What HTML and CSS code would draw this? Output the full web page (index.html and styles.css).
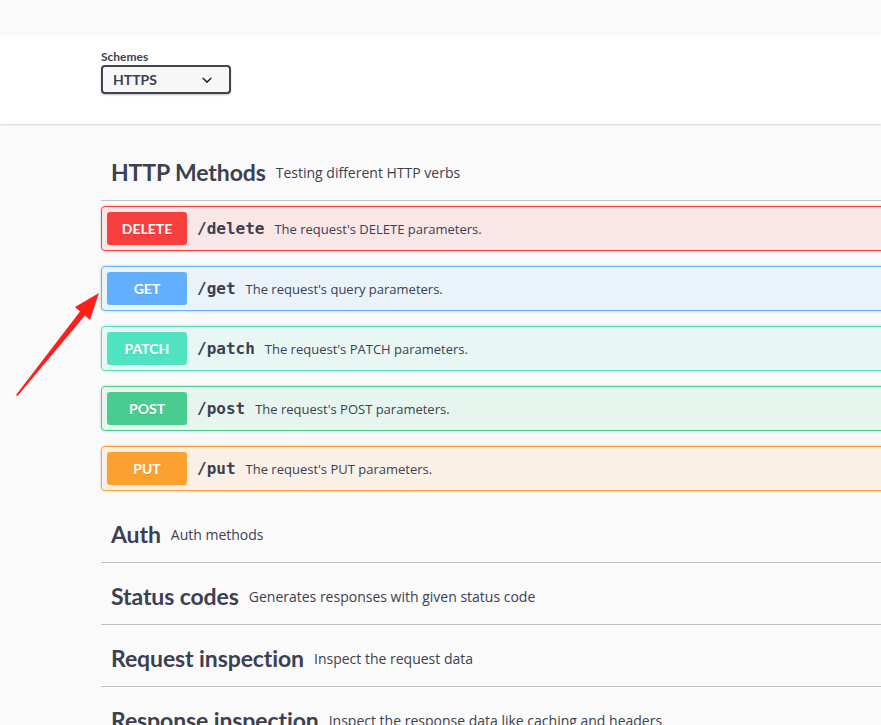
FILE: index.html
```html
<!DOCTYPE html>
<html lang="en">
<head>
<meta charset="utf-8">
<title>HTTP Methods</title>
<link rel="stylesheet" href="styles.css">
</head>
<body>
<div class="topbar"></div>
<section class="scheme-container">
  <div class="schemes">
    <div class="schemes-label">Schemes</div>
    <div class="select">
      <span>HTTPS</span>
      <svg class="chev" width="20" height="20" viewBox="0 0 20 20"><path d="M13.418 7.859a.695.695 0 01.978 0 .68.68 0 010 .969l-3.908 3.83a.697.697 0 01-.979 0l-3.908-3.83a.68.68 0 010-.969.695.695 0 01.978 0L10 11l3.418-3.141z" fill="#222"/></svg>
    </div>
  </div>
</section>
<main class="wrapper">
  <h4 class="tag"><span class="tag-name">HTTP Methods</span><small class="tag-desc">Testing different HTTP verbs</small></h4>
  <div class="ops">
    <div class="opblock op-delete"><div class="summary"><span class="method">DELETE</span><span class="path">/delete</span><span class="desc">The request's DELETE parameters.</span></div></div>
    <div class="opblock op-get"><div class="summary"><span class="method">GET</span><span class="path">/get</span><span class="desc">The request's query parameters.</span></div></div>
    <div class="opblock op-patch"><div class="summary"><span class="method">PATCH</span><span class="path">/patch</span><span class="desc">The request's PATCH parameters.</span></div></div>
    <div class="opblock op-post"><div class="summary"><span class="method">POST</span><span class="path">/post</span><span class="desc">The request's POST parameters.</span></div></div>
    <div class="opblock op-put"><div class="summary"><span class="method">PUT</span><span class="path">/put</span><span class="desc">The request's PUT parameters.</span></div></div>
  </div>
  <h4 class="tag"><span class="tag-name">Auth</span><small class="tag-desc">Auth methods</small></h4>
  <h4 class="tag"><span class="tag-name">Status codes</span><small class="tag-desc">Generates responses with given status code</small></h4>
  <h4 class="tag"><span class="tag-name">Request inspection</span><small class="tag-desc">Inspect the request data</small></h4>
  <h4 class="tag"><span class="tag-name">Response inspection</span><small class="tag-desc">Inspect the response data like caching and headers</small></h4>
</main>
<svg class="annot" width="110" height="410" viewBox="0 0 110 410">
  <polygon points="16,395 80,311.5 75,307 99,293 90,320 85,315.5 17.5,396" fill="#ff1f1a"/>
</svg>
</body>
</html>
```

FILE: styles.css
```css
html, body {
  margin: 0;
  padding: 0;
}
body {
  background: #fafafa;
  overflow: hidden;
  position: relative;
  font-family: "Open Sans", "Noto Sans", sans-serif;
  color: #3b4151;
  height: 725px;
}
.topbar {
  height: 35px;
  background: #fafafa;
}
.scheme-container {
  background: #fff;
  box-shadow: 0 1px 2px 0 rgba(0, 0, 0, 0.15);
  padding: 14px 0 30px 101px;
}
.schemes-label {
  font-family: Lato, sans-serif;
  font-weight: 700;
  font-size: 12px;
  line-height: 16px;
  color: #3b4151;
}
.select {
  box-sizing: border-box;
  width: 130px;
  height: 29px;
  border: 2px solid #41444e;
  border-radius: 4px;
  background: #f7f7f7;
  box-shadow: 0 1px 2px 0 rgba(0, 0, 0, 0.25);
  display: flex;
  align-items: center;
  justify-content: space-between;
  padding: 0 12px 0 10px;
  font-family: Lato, sans-serif;
  font-weight: 700;
  font-size: 14px;
  color: #3b4151;
}
.chev {
  display: block;
}
.wrapper {
  margin: 20px 0 0 101px;
  width: 900px;
}
.tag {
  display: flex;
  align-items: center;
  margin: 0 0 5px;
  padding: 10px 20px 10px 10px;
  border-bottom: 1px solid rgba(59, 65, 81, 0.3);
}
.tag-name {
  font-family: Lato, sans-serif;
  font-weight: 700;
  font-size: 23px;
  line-height: 36px;
  letter-spacing: -0.1px;
}
.tag-desc {
  font-size: 14px;
  font-weight: 400;
  padding: 0 10px;
}
.opblock {
  margin: 0 0 15px;
  border: 1px solid #000;
  border-radius: 4px;
  box-shadow: 0 0 3px rgba(0, 0, 0, 0.19);
}
.summary {
  display: flex;
  align-items: center;
  padding: 5px;
}
.method {
  min-width: 80px;
  padding: 6px 0;
  line-height: 21px;
  text-align: center;
  font-family: Lato, sans-serif;
  font-weight: 700;
  font-size: 14px;
  color: #fff;
  border-radius: 3px;
  text-shadow: 0 1px 0 rgba(0, 0, 0, 0.1);
}
.path {
  font-family: "DejaVu Sans Mono", monospace;
  font-weight: 700;
  font-size: 16px;
  padding: 0 10px;
  color: #3b4151;
}
.desc {
  font-size: 13px;
  color: #3b4151;
}
.op-delete { background: rgba(249, 62, 62, 0.1); border-color: #f93e3e; }
.op-delete .method { background: #f93e3e; }
.op-get { background: rgba(97, 175, 254, 0.1); border-color: #61affe; }
.op-get .method { background: #61affe; }
.op-patch { background: rgba(80, 227, 194, 0.1); border-color: #50e3c2; }
.op-patch .method { background: #50e3c2; }
.op-post { background: rgba(73, 204, 144, 0.1); border-color: #49cc90; }
.op-post .method { background: #49cc90; }
.op-put { background: rgba(252, 161, 48, 0.1); border-color: #fca130; }
.op-put .method { background: #fca130; }
.annot {
  position: absolute;
  left: 0;
  top: 0;
  pointer-events: none;
}
```
